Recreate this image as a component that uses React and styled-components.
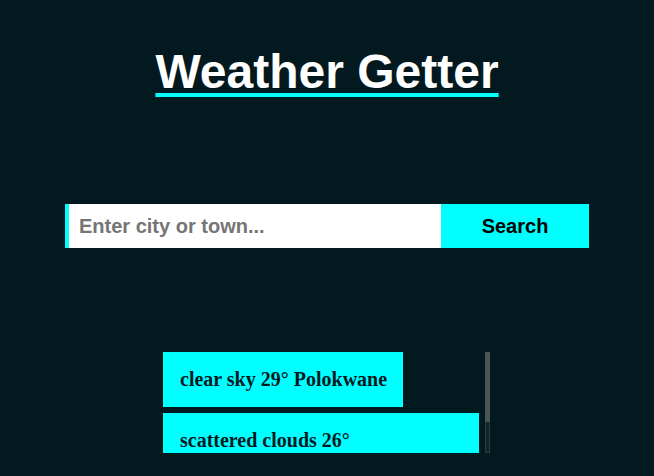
import styled, { createGlobalStyle } from 'styled-components'

const GlobalStyle = createGlobalStyle`
  html, body {
    margin: 0;
    padding: 0;
    background: #021a1f;
  }
`

const Page = styled.div`
  width: 654px;
  height: 476px;
  overflow: hidden;
  display: flex;
  flex-direction: column;
  align-items: center;
  font-family: "Liberation Sans", Arial, sans-serif;
`

const Title = styled.h1`
  margin: 43px 0 0;
  color: #ffffff;
  font-size: 48px;
  font-weight: 700;
  line-height: 58px;
  text-decoration: underline;
  text-decoration-color: #00ffff;
  text-decoration-thickness: 4px;
  text-underline-offset: 5px;
`

const SearchForm = styled.form`
  margin-top: 103px;
  display: flex;
  width: 524px;
  height: 44px;
  border-left: 4px solid #00ffff;
  box-sizing: border-box;
`

const CityInput = styled.input`
  flex: 1;
  min-width: 0;
  border: none;
  outline: none;
  padding: 0 10px;
  font-family: "Liberation Sans", Arial, sans-serif;
  font-size: 20px;
  font-weight: 700;
  color: #222;
  background: #ffffff;

  &::placeholder {
    color: #757575;
  }
`

const SearchButton = styled.button`
  width: 148px;
  border: none;
  background: #00ffff;
  color: #000;
  font-family: "Liberation Sans", Arial, sans-serif;
  font-size: 20px;
  font-weight: 700;
  cursor: pointer;
`

const ResultsBox = styled.div`
  margin: 104px 1px 0 0;
  width: 327px;
  height: 101px;
  display: flex;
`

const ResultList = styled.div`
  flex: 1;
  overflow: hidden;
  display: flex;
  flex-direction: column;
  align-items: flex-start;
  gap: 6px;
`

const ScrollTrack = styled.div`
  width: 5px;
  box-sizing: border-box;
  background: #0f2629;
  border: 1px solid #2c3c3d;
  display: flex;
  flex-direction: column;
`

const ScrollThumb = styled.div`
  height: ${(p) => p.$size}px;
  margin: -1px;
  background: #4a5655;
`

const ResultCard = styled.div`
  flex-shrink: 0;
  box-sizing: border-box;
  max-width: 316px;
  background: #00ffff;
  color: #021a1f;
  padding: 17px 16px 17px 17px;
  font-family: "Liberation Serif", "Times New Roman", serif;
  font-size: 20px;
  font-weight: 700;
  line-height: 21px;
`

const results = [
  { desc: 'clear sky', temp: 29, city: 'Polokwane' },
  { desc: 'scattered clouds', temp: 26, city: 'Johannesburg' },
]

export default function App() {
  return (
    <Page>
      <GlobalStyle />
      <Title>Weather Getter</Title>
      <SearchForm onSubmit={(e) => e.preventDefault()}>
        <CityInput placeholder="Enter city or town..." />
        <SearchButton type="submit">Search</SearchButton>
      </SearchForm>
      <ResultsBox>
        <ResultList>
          {results.map((r) => (
            <ResultCard key={r.city}>
              {r.desc} {r.temp}° {r.city}
            </ResultCard>
          ))}
        </ResultList>
        <ScrollTrack>
          <ScrollThumb $size={70} />
        </ScrollTrack>
      </ResultsBox>
    </Page>
  )
}
